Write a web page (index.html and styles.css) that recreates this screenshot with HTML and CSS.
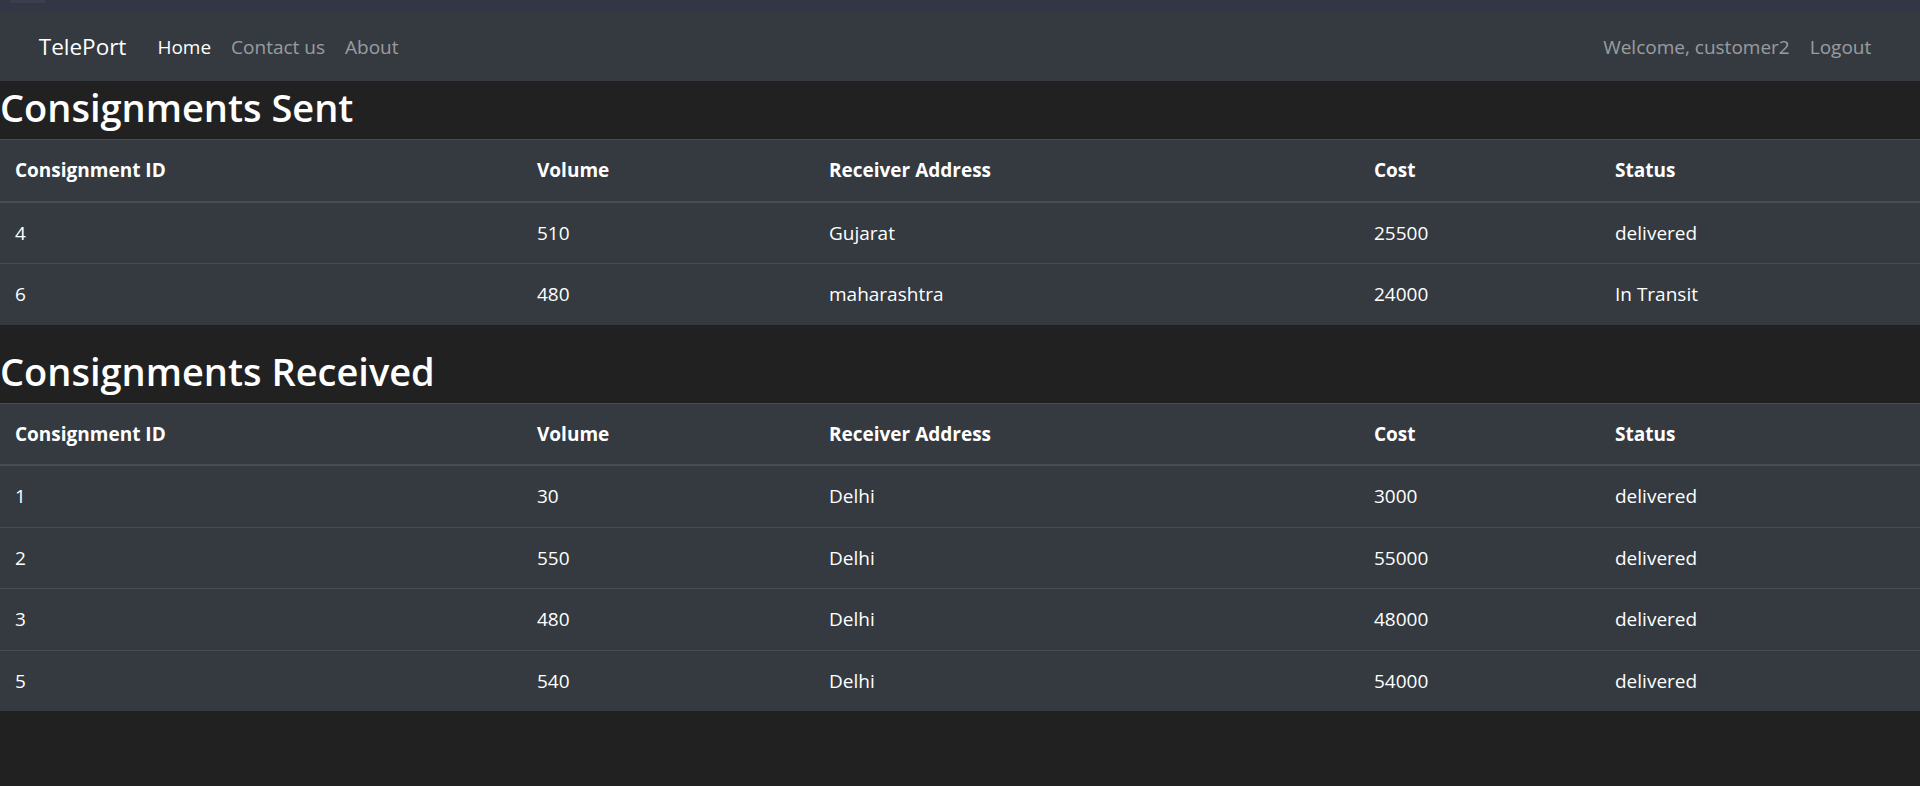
FILE: index.html
```html
<!DOCTYPE html>
<html lang="en">
<head>
<meta charset="utf-8">
<title>TelePort</title>
<link rel="stylesheet" href="styles.css">
</head>
<body>
<div class="topstrip"><span class="tab"></span></div>
<nav class="navbar">
  <div class="nav-inner">
    <a class="brand" href="#">TelePort</a>
    <ul class="nav">
      <li><a class="nav-link active" href="#">Home</a></li>
      <li><a class="nav-link" href="#">Contact us</a></li>
      <li><a class="nav-link" href="#">About</a></li>
    </ul>
    <ul class="nav nav-right">
      <li><span class="nav-link">Welcome, customer2</span></li>
      <li><a class="nav-link" href="#">Logout</a></li>
    </ul>
  </div>
</nav>
<main>
  <h2 class="title">Consignments Sent</h2>
  <table class="tbl">
    <colgroup>
      <col class="c1"><col class="c2"><col class="c3"><col class="c4"><col class="c5">
    </colgroup>
    <thead>
      <tr><th>Consignment ID</th><th>Volume</th><th>Receiver Address</th><th>Cost</th><th>Status</th></tr>
    </thead>
    <tbody>
      <tr><td>4</td><td>510</td><td>Gujarat</td><td>25500</td><td>delivered</td></tr>
      <tr><td>6</td><td>480</td><td>maharashtra</td><td>24000</td><td>In Transit</td></tr>
    </tbody>
  </table>
  <h2 class="title">Consignments Received</h2>
  <table class="tbl">
    <colgroup>
      <col class="c1"><col class="c2"><col class="c3"><col class="c4"><col class="c5">
    </colgroup>
    <thead>
      <tr><th>Consignment ID</th><th>Volume</th><th>Receiver Address</th><th>Cost</th><th>Status</th></tr>
    </thead>
    <tbody>
      <tr><td>1</td><td>30</td><td>Delhi</td><td>3000</td><td>delivered</td></tr>
      <tr><td>2</td><td>550</td><td>Delhi</td><td>55000</td><td>delivered</td></tr>
      <tr><td>3</td><td>480</td><td>Delhi</td><td>48000</td><td>delivered</td></tr>
      <tr><td>5</td><td>540</td><td>Delhi</td><td>54000</td><td>delivered</td></tr>
    </tbody>
  </table>
</main>
</body>
</html>
```
FILE: styles.css
```css
* { box-sizing: border-box; }
html, body { margin: 0; padding: 0; }
body {
  background: #212121;
  color: #fff;
  font-family: "Open Sans", "Noto Sans", "DejaVu Sans", sans-serif;
  font-size: 19px;
  line-height: 30px;
}
.topstrip {
  height: 12px;
  background: #323645;
  padding-left: 10px;
}
.topstrip .tab {
  display: block;
  width: 35px;
  height: 3px;
  background: #3a3e4e;
}
.navbar {
  background: #343a40;
  padding: 10px 20px;
  height: 69px;
}
.nav-inner {
  display: flex;
  align-items: center;
  padding: 0 18.75px;
  height: 49px;
}
.brand {
  color: #fff;
  text-decoration: none;
  font-size: 22.5px;
  line-height: 37.5px;
  margin-right: 21px;
}
.nav {
  display: flex;
  list-style: none;
  margin: 0;
  padding: 0;
}
.nav-right { margin-left: auto; }
.nav-link {
  display: block;
  padding: 10px;
  color: rgba(255,255,255,.5);
  text-decoration: none;
  line-height: 30px;
}
.nav-link.active { color: #fff; }
main { display: block; }
.title {
  margin: 0 0 10px;
  font-size: 38px;
  line-height: 48px;
  font-weight: 600;
  padding-top: 2px;
  height: 48px;
}
.tbl {
  width: 100%;
  border-collapse: collapse;
  background: #343a40;
  color: #fff;
  margin-bottom: 20px;
  table-layout: fixed;
}
.c1 { width: 522px; }
.c2 { width: 292px; }
.c3 { width: 545px; }
.c4 { width: 241px; }
.tbl th, .tbl td {
  padding: 15.25px 15px;
  text-align: left;
  vertical-align: top;
  border-top: 1px solid #454d55;
  line-height: 30px;
}
.tbl th { font-weight: 700; }
.tbl thead th { border-bottom: 2.5px solid #454d55; }
```
